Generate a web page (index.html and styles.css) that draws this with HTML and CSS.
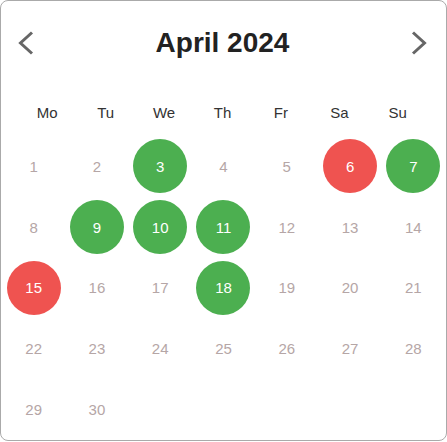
FILE: index.html
```html
<!DOCTYPE html>
<html>
<head>
<meta charset="utf-8">
<link rel="stylesheet" href="styles.css">
</head>
<body>
<div class="card">
  <div class="header">
    <button class="nav" aria-label="Previous month">
      <svg width="16" height="24" viewBox="0 0 16 24"><polyline points="14,1.5 2.5,12 14,22.5" fill="none" stroke="#666" stroke-width="3"/></svg>
    </button>
    <div class="title">April 2024</div>
    <button class="nav" aria-label="Next month">
      <svg width="16" height="24" viewBox="0 0 16 24"><polyline points="2,1.5 13.5,12 2,22.5" fill="none" stroke="#666" stroke-width="3"/></svg>
    </button>
  </div>
  <div class="weekdays">
    <div>Mo</div><div>Tu</div><div>We</div><div>Th</div><div>Fr</div><div>Sa</div><div>Su</div>
  </div>
  <div class="days">
    <div class="day"><span>1</span></div>
    <div class="day"><span>2</span></div>
    <div class="day"><span class="green">3</span></div>
    <div class="day"><span>4</span></div>
    <div class="day"><span>5</span></div>
    <div class="day"><span class="red">6</span></div>
    <div class="day"><span class="green">7</span></div>
    <div class="day"><span>8</span></div>
    <div class="day"><span class="green">9</span></div>
    <div class="day"><span class="green">10</span></div>
    <div class="day"><span class="green">11</span></div>
    <div class="day"><span>12</span></div>
    <div class="day"><span>13</span></div>
    <div class="day"><span>14</span></div>
    <div class="day"><span class="red">15</span></div>
    <div class="day"><span>16</span></div>
    <div class="day"><span>17</span></div>
    <div class="day"><span class="green">18</span></div>
    <div class="day"><span>19</span></div>
    <div class="day"><span>20</span></div>
    <div class="day"><span>21</span></div>
    <div class="day"><span>22</span></div>
    <div class="day"><span>23</span></div>
    <div class="day"><span>24</span></div>
    <div class="day"><span>25</span></div>
    <div class="day"><span>26</span></div>
    <div class="day"><span>27</span></div>
    <div class="day"><span>28</span></div>
    <div class="day"><span>29</span></div>
    <div class="day"><span>30</span></div>
  </div>
</div>
</body>
</html>
```
FILE: styles.css
```css
* { box-sizing: border-box; }
html, body { margin: 0; padding: 0; background: #fff; }
body { font-family: "Liberation Sans", Arial, sans-serif; }

.card {
  width: 447px;
  height: 441px;
  border: 1px solid #aaa;
  border-radius: 8px;
  padding: 0 1px;
  background: #fff;
}

.header {
  height: 84px;
  display: flex;
  align-items: center;
  justify-content: space-between;
  padding: 0 18px 0 16px;
}

.nav {
  background: none;
  border: 0;
  padding: 0;
  width: 16px;
  height: 24px;
  display: flex;
  cursor: pointer;
}

.title {
  font-size: 28px;
  font-weight: bold;
  color: #222;
}

.weekdays {
  height: 51px;
  padding: 3px 18px 0 16px;
  display: grid;
  grid-template-columns: repeat(7, 1fr);
  align-items: center;
  text-align: center;
  font-size: 15px;
  color: #333;
}

.days {
  display: grid;
  grid-template-columns: repeat(7, 1fr);
  grid-auto-rows: 60.7px;
}

.day {
  display: flex;
  align-items: center;
  justify-content: center;
}

.day span {
  width: 54px;
  height: 54px;
  border-radius: 50%;
  display: flex;
  align-items: center;
  justify-content: center;
  font-size: 15px;
  color: #b5a6a6;
}

.day span.green { background: #4caf50; color: #fff; }
.day span.red { background: #ef5350; color: #fff; }
```
